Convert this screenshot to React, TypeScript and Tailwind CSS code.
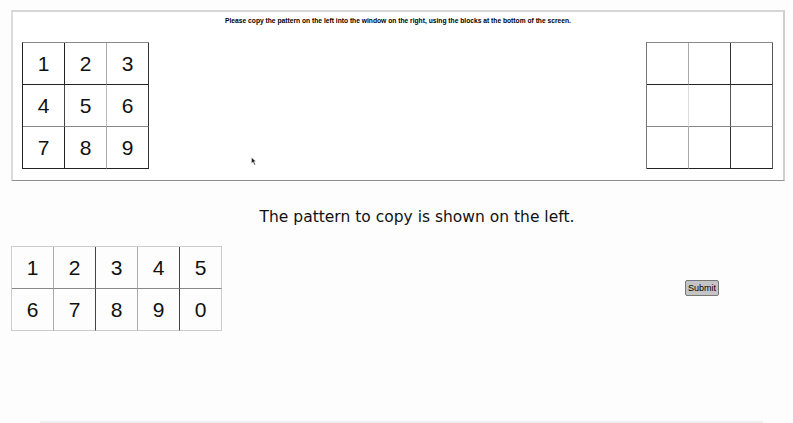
import React from "react";

const DIG = { fontFamily: '"Liberation Sans", Arial, Helvetica, sans-serif' };

function Cell({ c, cls }: { c?: string; cls: string }) {
  return (
    <div
      className={`w-[42px] h-[42px] flex items-center justify-center text-[21px] text-[#111] ${cls}`}
      style={DIG}
    >
      {c}
    </div>
  );
}

export default function App() {
  const leftCells = [
    ["1", "border-r-[#222] border-b-[#222]"],
    ["2", "border-r-[#aaa] border-b-[#222]"],
    ["3", "border-r-[#333] border-b-[#222]"],
    ["4", "border-r-[#444] border-b-[#888]"],
    ["5", "border-r-[#bbb] border-b-[#888]"],
    ["6", "border-r-[#333] border-b-[#888]"],
    ["7", "border-r-[#222] border-b-[#222]"],
    ["8", "border-r-[#aaa] border-b-[#222]"],
    ["9", "border-r-[#333] border-b-[#222]"],
  ];
  const rightCells = [
    "border-r-[#aaa] border-b-[#222]",
    "border-r-[#333] border-b-[#222]",
    "border-r-[#555] border-b-[#222]",
    "border-r-[#ddd] border-b-[#888]",
    "border-r-[#555] border-b-[#888]",
    "border-r-[#555] border-b-[#888]",
    "border-r-[#aaa] border-b-[#222]",
    "border-r-[#333] border-b-[#222]",
    "border-r-[#555] border-b-[#222]",
  ];
  const bottomCells = [
    ["1", "border-r-[#aaa] border-b-[#888]"],
    ["2", "border-r-[#444] border-b-[#888]"],
    ["3", "border-r-[#aaa] border-b-[#888]"],
    ["4", "border-r-[#444] border-b-[#888]"],
    ["5", "border-r-[#ccc] border-b-[#888]"],
    ["6", "border-r-[#aaa] border-b-[#ccc]"],
    ["7", "border-r-[#444] border-b-[#ccc]"],
    ["8", "border-r-[#aaa] border-b-[#ccc]"],
    ["9", "border-r-[#444] border-b-[#ccc]"],
    ["0", "border-r-[#ccc] border-b-[#ccc]"],
  ];

  return (
    <div className="w-[793px] min-h-[423px] bg-[#fdfdfe] flex flex-col pt-[10px] relative overflow-hidden">
      {/* Top box */}
      <div className="ml-[11px] w-[774px] h-[171px] border-t-2 border-l-2 border-t-[#d6d6d6] border-l-[#dcdcdc] border-r-2 border-r-[#cfcfcf] border-b border-b-[#8e8e8e] bg-white relative flex flex-col">
        <div
          className="text-center text-[6.7px] font-bold text-black leading-[8px] pt-[5px]"
          style={DIG}
        >
          Please copy the pattern on the left into the window on the right, using the blocks at the bottom of the screen.
        </div>
        <div className="flex justify-between mt-[17px] pl-[9px] pr-[10px]">
          <div className="grid grid-cols-3 w-fit border-t border-l border-t-[#888] border-l-[#222]">
            {leftCells.map(([c, cls], i) => (
              <Cell key={i} c={c} cls={`border-r border-b ${cls}`} />
            ))}
          </div>
          <div className="grid grid-cols-3 w-fit border-t border-l border-t-[#888] border-l-[#777]">
            {rightCells.map((cls, i) => (
              <Cell key={i} cls={`border-r border-b ${cls}`} />
            ))}
          </div>
        </div>
        <svg
          className="absolute left-[238px] top-[145px]"
          width="6"
          height="9"
          viewBox="0 0 6 9"
        >
          <path d="M0.5 0.5 L0.5 6.5 L2 5 L3.5 8 L4.5 7.5 L3 4.5 L5 4.5 Z" fill="#222" stroke="#fff" strokeWidth="0.4" />
        </svg>
      </div>

      {/* Heading */}
      <div
        className="mt-[27px] pl-[41px] text-center text-[15.5px] leading-[18px] text-[#111]"
        style={{ fontFamily: '"DejaVu Sans", Verdana, sans-serif' }}
      >
        The pattern to copy is shown on the left.
      </div>

      {/* Blocks row */}
      <div className="flex items-center mt-[20px] ml-[11px]">
        <div className="grid grid-cols-5 w-fit border-t border-l border-t-[#ccc] border-l-[#ccc]">
          {bottomCells.map(([c, cls], i) => (
            <Cell key={i} c={c} cls={`border-r border-b ${cls}`} />
          ))}
        </div>
        <button
          className="ml-[463px] -mt-[1px] h-[16px] px-[2px] bg-[#c4c4c4] border border-[#777] rounded-[2px] text-[9px] leading-[14px] text-black"
          style={DIG}
        >
          Submit
        </button>
      </div>

      <div className="absolute left-[40px] right-[30px] bottom-0 h-[2px] bg-[#eef0f2]" />
    </div>
  );
}
